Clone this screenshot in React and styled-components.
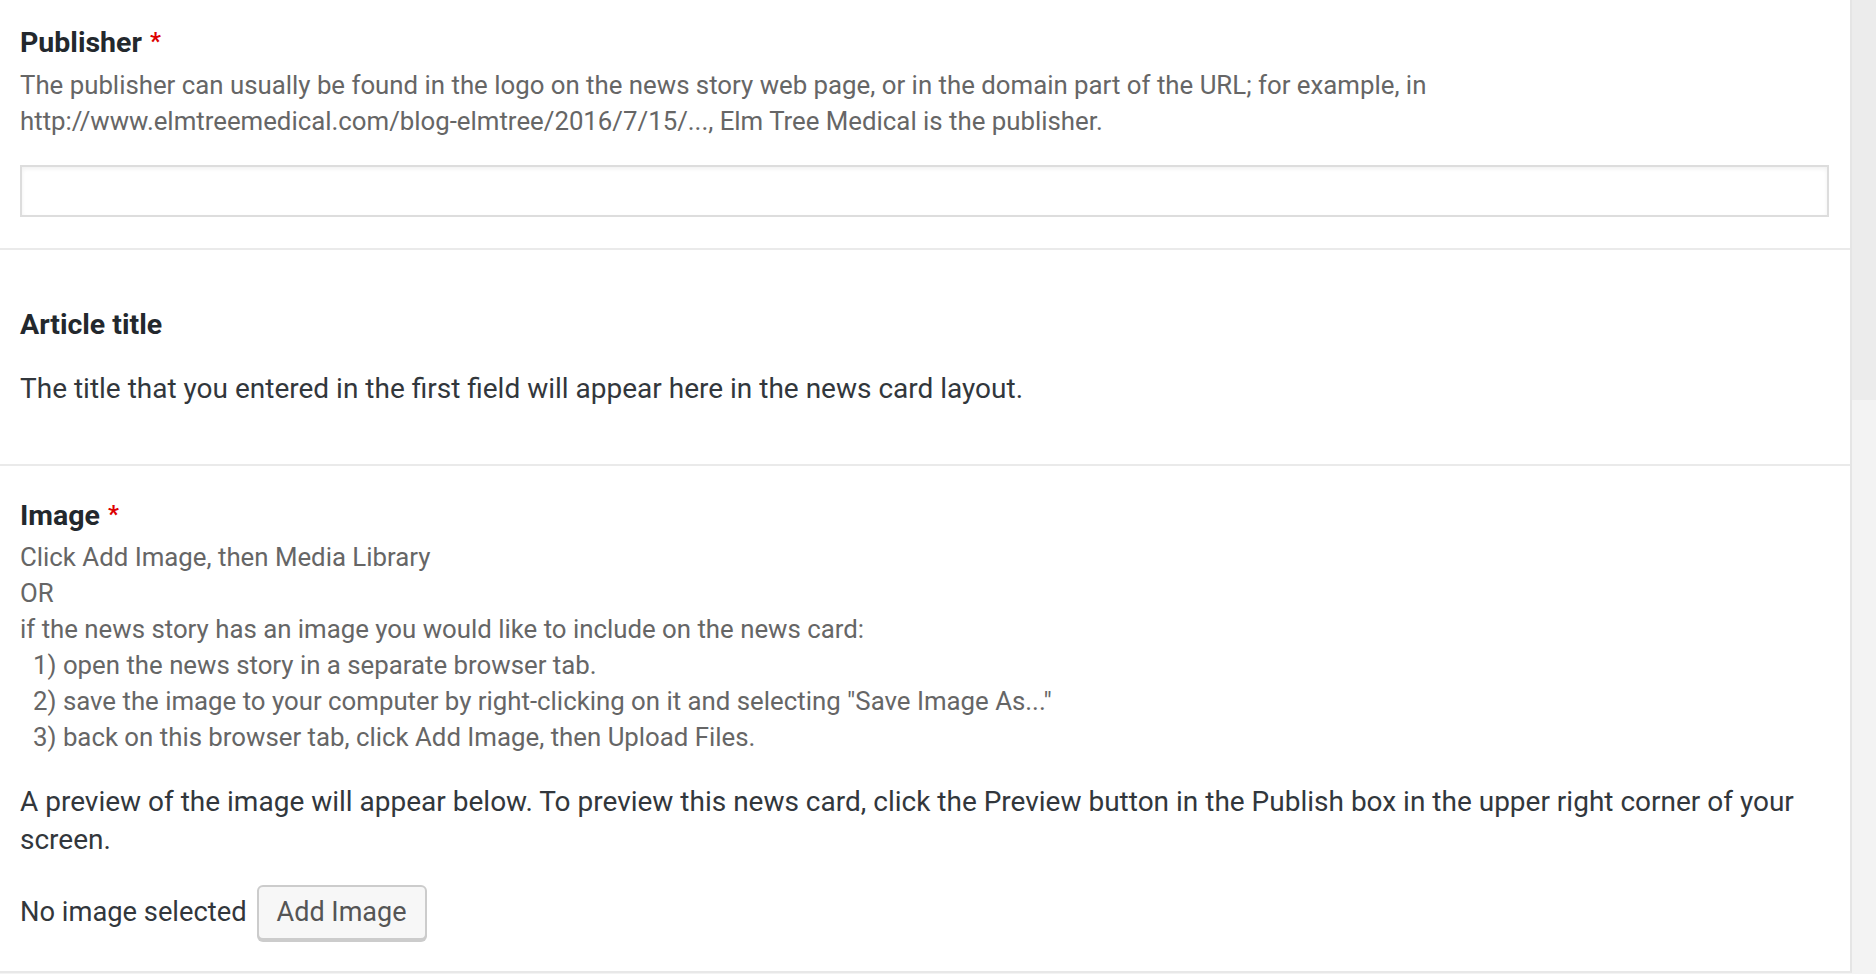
import React from "react";
import styled, { createGlobalStyle } from "styled-components";

const Global = createGlobalStyle`
  html, body { margin: 0; padding: 0; background: #f3f3f3; }
  body { font-family: Roboto, "Liberation Sans", Arial, sans-serif; -webkit-font-smoothing: antialiased; }
  * { box-sizing: border-box; }
`;

const Page = styled.div`
  display: flex;
  align-items: flex-start;
  width: 1876px;
  min-height: 974px;
`;

const Panel = styled.div`
  width: 1852px;
  flex: none;
  background: #fff;
  border-right: 2px solid #e5e5e5;
  border-bottom: 2px solid #e8e8e8;
`;

const Side = styled.div`
  flex: 1;
  display: flex;
  flex-direction: column;
`;

const SideBlock = styled.div`
  height: 400px;
  background: #ececec;
`;

const Field = styled.div`
  padding: ${(p) => p.$pad};
  border-top: ${(p) => (p.$first ? "none" : "2px solid #eaeaea")};
`;

const Label = styled.div`
  font-size: 28.5px;
  font-weight: 700;
  line-height: 36px;
  color: #23282d;
`;

const Star = styled.span`
  color: #dd0000;
  font-size: 24px;
  margin-left: 8px;
  vertical-align: 3px;
`;

const Desc = styled.div`
  margin-top: ${(p) => p.$mt || "6px"};
  font-size: 25.8px;
  line-height: 36px;
  color: #666;
`;

const Indent = styled.div`
  padding-left: 13px;
`;

const Input = styled.div`
  margin-top: 26px;
  height: 52px;
  border: 2px solid #dddddd;
  background: #fff;
  box-shadow: inset 0 2px 4px rgba(0, 0, 0, 0.06);
`;

const Para = styled.p`
  margin: ${(p) => p.$m};
  font-size: 28px;
  line-height: 38.5px;
  color: #32373c;
`;

const Row = styled.div`
  display: flex;
  align-items: center;
  gap: 10px;
  margin-top: 25px;
`;

const RowText = styled.span`
  font-size: 27.3px;
  color: #32373c;
`;

const Button = styled.button`
  height: 55px;
  padding: 0 18px;
  font-family: inherit;
  font-size: 27px;
  color: #555;
  background: #f7f7f7;
  border: 2px solid #cccccc;
  border-radius: 6px;
  box-shadow: 0 2px 0 #cccccc;
  cursor: pointer;
`;

export default function App() {
  return (
    <>
      <Global />
      <Page>
        <Panel>
          <Field $first $pad="23px 21px 31px 20px">
            <Label>
              Publisher<Star>*</Star>
            </Label>
            <Desc>
              The publisher can usually be found in the logo on the news story web page, or in the domain part of the URL; for example, in
              <br />
              http://www.elmtreemedical.com/blog-elmtree/2016/7/15/..., Elm Tree Medical is the publisher.
            </Desc>
            <Input />
          </Field>
          <Field $pad="57px 21px 55px 20px">
            <Label>Article title</Label>
            <Para $m="27px 0 0">
              The title that you entered in the first field will appear here in the news card layout.
            </Para>
          </Field>
          <Field $pad="30px 21px 31px 20px">
            <Label>
              Image<Star>*</Star>
            </Label>
            <Desc $mt="5px">
              <div>Click Add Image, then Media Library</div>
              <div>OR</div>
              <div>if the news story has an image you would like to include on the news card:</div>
              <Indent>1) open the news story in a separate browser tab.</Indent>
              <Indent>2) save the image to your computer by right-clicking on it and selecting "Save Image As..."</Indent>
              <Indent>3) back on this browser tab, click Add Image, then Upload Files.</Indent>
            </Desc>
            <Para $m="28px 0 0">
              A preview of the image will appear below. To preview this news card, click the Preview button in the Publish box in the upper right corner of your screen.
            </Para>
            <Row>
              <RowText>No image selected</RowText>
              <Button>Add Image</Button>
            </Row>
          </Field>
        </Panel>
        <Side>
          <SideBlock />
        </Side>
      </Page>
    </>
  );
}
